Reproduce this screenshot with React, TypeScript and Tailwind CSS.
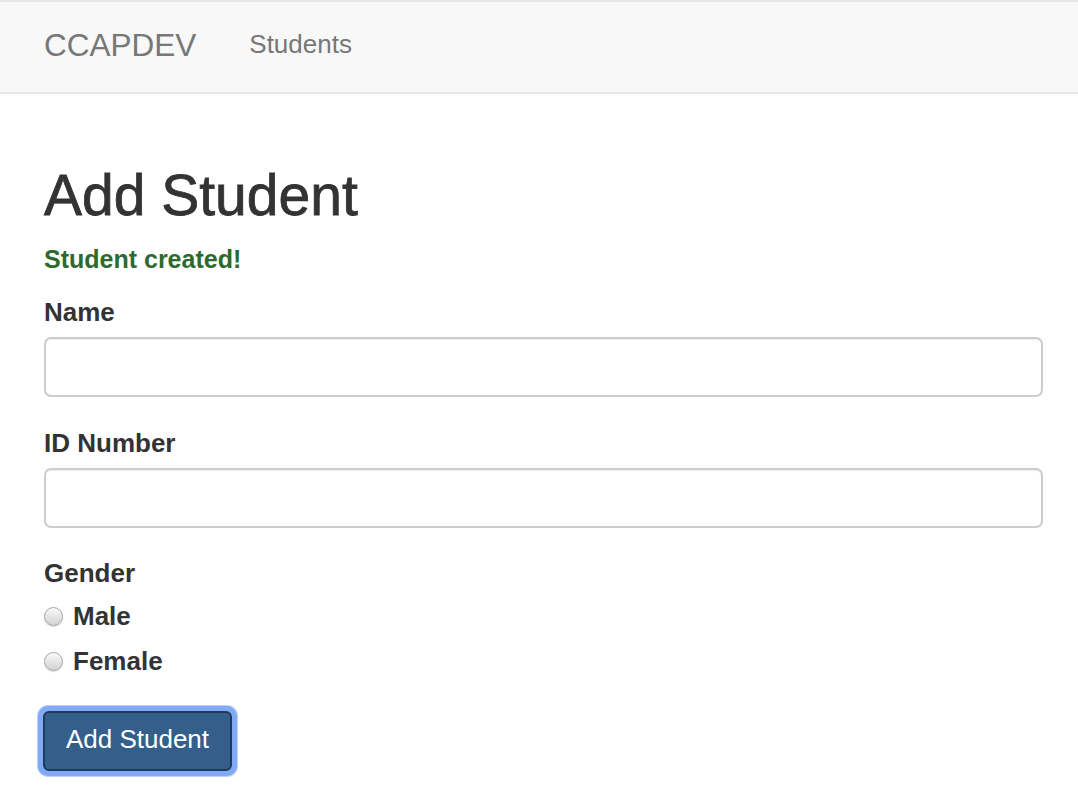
import { useState } from 'react';

const App = () => {
  const [gender, setGender] = useState<string | null>(null);

  return (
    <div
      className="min-h-[802px] bg-white text-[#333]"
      style={{ fontFamily: '"Liberation Sans", Arial, sans-serif' }}
    >
      {/* navbar */}
      <nav className="h-[94px] bg-[#f8f8f8] border-t-2 border-b-2 border-[#e7e7e7] flex items-start px-[44px]">
        <span className="mt-[28px] text-[31.5px] text-[#777] leading-none">CCAPDEV</span>
        <a className="mt-[29px] ml-[53px] text-[26px] text-[#777] leading-none" href="#">
          Students
        </a>
      </nav>

      <div className="pl-[44px] pr-[35px]">
        <h1 className="mt-[73px] text-[57px] font-normal leading-none text-[#333] [-webkit-text-stroke:0.8px_#333]">
          Add Student
        </h1>
        <p className="mt-[23px] text-[25px] font-bold text-[#2d6a2d] leading-none">
          Student created!
        </p>

        <div className="mt-[27px] flex flex-col">
          <label className="text-[26px] font-bold leading-none">Name</label>
          <input className="mt-[12px] h-[60px] w-full border-2 border-[#ccc] rounded-[7px] px-3 text-[24px] outline-none shadow-[inset_0_1px_1px_rgba(0,0,0,0.075)]" />
        </div>

        <div className="mt-[33px] flex flex-col">
          <label className="text-[26px] font-bold leading-none">ID Number</label>
          <input className="mt-[12px] h-[60px] w-full border-2 border-[#ccc] rounded-[7px] px-3 text-[24px] outline-none shadow-[inset_0_1px_1px_rgba(0,0,0,0.075)]" />
        </div>

        <div className="mt-[32px] flex flex-col">
          <span className="text-[26px] font-bold leading-none">Gender</span>
          {['Male', 'Female'].map((g, i) => (
            <label
              key={g}
              className={`flex items-center gap-[10px] cursor-pointer ${i === 0 ? 'mt-[17px]' : 'mt-[19px]'}`}
              onClick={() => setGender(g)}
            >
              <span className="w-[19px] h-[19px] rounded-full border border-[#a8a8a8] bg-gradient-to-b from-[#fafafa] to-[#d2d2d2] shadow-[0_1px_1px_rgba(0,0,0,0.15)] flex items-center justify-center">
                {gender === g && <span className="w-[7px] h-[7px] rounded-full bg-[#333]" />}
              </span>
              <span className="text-[26px] font-bold leading-none">{g}</span>
            </label>
          ))}
        </div>

        <button className="mt-[32px] ml-[-6px] p-[5px] rounded-[10px] bg-[#82a9f3] shadow-[0_0_0_1px_#bcd2fa] block">
          <span className="block h-[60px] w-[189px] rounded-[6px] border-2 border-[#1d3b5f] bg-[#335f8a] text-white text-[26px] leading-[52px] text-center">
            Add Student
          </span>
        </button>
      </div>
    </div>
  );
};

export default App;
